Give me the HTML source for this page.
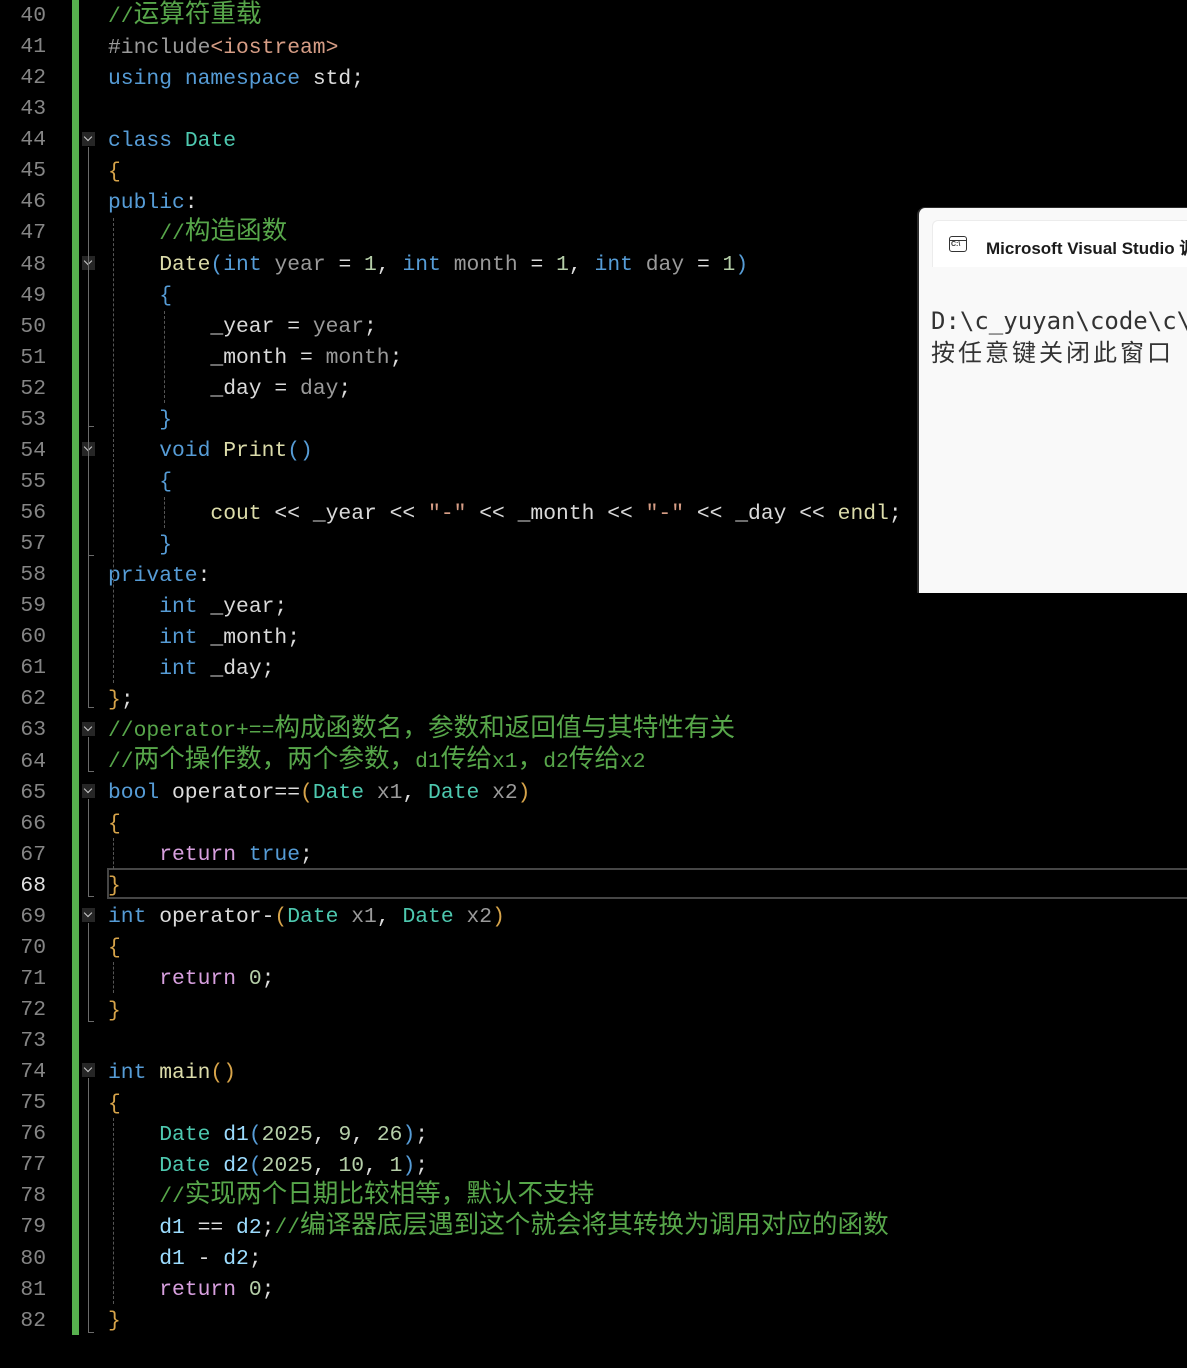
<!DOCTYPE html>
<html><head><meta charset="utf-8"><style>
body{margin:0;width:1187px;height:1368px;background:#000;overflow:hidden;position:relative;font-family:"Liberation Mono","Noto Sans CJK SC",monospace;}
#nums{position:absolute;left:0;top:1px;width:46px;text-align:right;color:#858585;font-size:21.33px;}
#nums div,#code div{height:31.07px;line-height:31.07px;}
#code{position:absolute;left:108px;top:1.5px;white-space:pre;font-size:21.33px;color:#dcdcdc;}
.z{font-family:"Noto Sans CJK SC",sans-serif;font-size:25.6px;line-height:20px;}
.k{color:#569cd6}.t{color:#4ec9b0}.c{color:#57a64a}.f{color:#dcdcaa}.p{color:#9a9a9a}.v{color:#9cdcfe}.n{color:#b5cea8}.s{color:#d69d85}.r{color:#d8a0df}.m{color:#dadada}.b1{color:#d7a44a}.b2{color:#569cd6}
.bar{position:absolute;left:72px;top:0;width:7px;height:1335px;background:#57b04e}
.fb{position:absolute;left:82px;width:13px;height:14px;background:#262626}
.fb:after{content:"";position:absolute;left:3px;top:2px;width:5px;height:5px;border-right:1.5px solid #ccc;border-bottom:1.5px solid #ccc;transform:rotate(45deg)}
.fl{position:absolute;left:88px;width:1px;background:#6a6a6a}
.tk{position:absolute;left:88px;width:6px;height:1px;background:#6a6a6a}
.dg{position:absolute;width:0;border-left:1px dashed #555}
</style></head><body>
<div class="bar"></div>
<div id="nums"><div>40</div><div>41</div><div>42</div><div>43</div><div>44</div><div>45</div><div>46</div><div>47</div><div>48</div><div>49</div><div>50</div><div>51</div><div>52</div><div>53</div><div>54</div><div>55</div><div>56</div><div>57</div><div>58</div><div>59</div><div>60</div><div>61</div><div>62</div><div>63</div><div>64</div><div>65</div><div>66</div><div>67</div><div style="color:#e0e0e0">68</div><div>69</div><div>70</div><div>71</div><div>72</div><div>73</div><div>74</div><div>75</div><div>76</div><div>77</div><div>78</div><div>79</div><div>80</div><div>81</div><div>82</div></div>

<div style="position:absolute;left:107px;top:868px;width:1090px;height:27px;border:2px solid #464646"></div>

<div id="code"><div><span class="c">//<span class="z">运算符重载</span></span></div><div><span class="p">#include</span><span class="s">&lt;iostream&gt;</span></div><div><span class="k">using</span> <span class="k">namespace</span> std;</div><div> </div><div><span class="k">class</span> <span class="t">Date</span></div><div><span class="b1">{</span></div><div><span class="k">public</span>:</div><div>    <span class="c">//<span class="z">构造函数</span></span></div><div>    <span class="f">Date</span><span class="b2">(</span><span class="k">int</span> <span class="p">year</span> = <span class="n">1</span>, <span class="k">int</span> <span class="p">month</span> = <span class="n">1</span>, <span class="k">int</span> <span class="p">day</span> = <span class="n">1</span><span class="b2">)</span></div><div>    <span class="b2">{</span></div><div>        <span class="m">_year</span> = <span class="p">year</span>;</div><div>        <span class="m">_month</span> = <span class="p">month</span>;</div><div>        <span class="m">_day</span> = <span class="p">day</span>;</div><div>    <span class="b2">}</span></div><div>    <span class="k">void</span> <span class="f">Print</span><span class="b2">()</span></div><div>    <span class="b2">{</span></div><div>        <span class="f">cout</span> &lt;&lt; <span class="m">_year</span> &lt;&lt; <span class="s">"-"</span> &lt;&lt; <span class="m">_month</span> &lt;&lt; <span class="s">"-"</span> &lt;&lt; <span class="m">_day</span> &lt;&lt; <span class="f">endl</span>;</div><div>    <span class="b2">}</span></div><div><span class="k">private</span>:</div><div>    <span class="k">int</span> <span class="m">_year</span>;</div><div>    <span class="k">int</span> <span class="m">_month</span>;</div><div>    <span class="k">int</span> <span class="m">_day</span>;</div><div><span class="b1">}</span>;</div><div><span class="c">//operator+==<span class="z">构成函数名，参数和返回值与其特性有关</span></span></div><div><span class="c">//<span class="z">两个操作数，两个参数，</span>d1<span class="z">传给</span>x1<span class="z">，</span>d2<span class="z">传给</span>x2</span></div><div><span class="k">bool</span> operator==<span class="b1">(</span><span class="t">Date</span> <span class="p">x1</span>, <span class="t">Date</span> <span class="p">x2</span><span class="b1">)</span></div><div><span class="b1">{</span></div><div>    <span class="r">return</span> <span class="k">true</span>;</div><div><span class="b1">}</span></div><div><span class="k">int</span> operator-<span class="b1">(</span><span class="t">Date</span> <span class="p">x1</span>, <span class="t">Date</span> <span class="p">x2</span><span class="b1">)</span></div><div><span class="b1">{</span></div><div>    <span class="r">return</span> <span class="n">0</span>;</div><div><span class="b1">}</span></div><div> </div><div><span class="k">int</span> <span class="f">main</span><span class="b1">()</span></div><div><span class="b1">{</span></div><div>    <span class="t">Date</span> <span class="v">d1</span><span class="b2">(</span><span class="n">2025</span>, <span class="n">9</span>, <span class="n">26</span><span class="b2">)</span>;</div><div>    <span class="t">Date</span> <span class="v">d2</span><span class="b2">(</span><span class="n">2025</span>, <span class="n">10</span>, <span class="n">1</span><span class="b2">)</span>;</div><div>    <span class="c">//<span class="z">实现两个日期比较相等，默认不支持</span></span></div><div>    <span class="v">d1</span> == <span class="v">d2</span>;<span class="c">//<span class="z">编译器底层遇到这个就会将其转换为调用对应的函数</span></span></div><div>    <span class="v">d1</span> - <span class="v">d2</span>;</div><div>    <span class="r">return</span> <span class="n">0</span>;</div><div><span class="b1">}</span></div></div>

<div class="fb" style="top:132px"></div>
<div class="fb" style="top:256px"></div>
<div class="fb" style="top:442px"></div>
<div class="fb" style="top:722px"></div>
<div class="fb" style="top:784px"></div>
<div class="fb" style="top:908px"></div>
<div class="fb" style="top:1063px"></div>
<div class="fl" style="top:147px;height:560px"></div><div class="tk" style="top:707px"></div>
<div class="tk" style="top:426px"></div><div class="tk" style="top:555px"></div>
<div class="fl" style="top:737px;height:34px"></div><div class="tk" style="top:771px"></div>
<div class="fl" style="top:799px;height:97px"></div><div class="tk" style="top:896px"></div>
<div class="fl" style="top:923px;height:98px"></div><div class="tk" style="top:1021px"></div>
<div class="fl" style="top:1078px;height:254px"></div><div class="tk" style="top:1332px"></div>

<div class="dg" style="left:113px;top:218px;height:465px"></div>
<div class="dg" style="left:164px;top:311px;height:92px"></div>
<div class="dg" style="left:164px;top:497px;height:31px"></div>
<div class="dg" style="left:113px;top:838px;height:31px"></div>
<div class="dg" style="left:113px;top:962px;height:31px"></div>
<div class="dg" style="left:113px;top:1118px;height:186px"></div>

<div style="position:absolute;left:917px;top:207px;width:280px;height:385px;background:#f9f9f9;border-left:2px solid #2b2b2b;border-top:1px solid #2b2b2b;border-top-left-radius:8px"></div>
<div style="position:absolute;left:932px;top:220px;width:260px;height:46px;background:#fff;border-top-left-radius:6px;border:1px solid #ececec;border-right:none;border-bottom:none"></div>
<div style="position:absolute;left:949px;top:236px;width:18px;height:16px;border:1.5px solid #333;border-radius:3px;box-sizing:border-box"><div style="position:absolute;left:0;right:0;top:3px;height:1px;background:#333"></div><div style="position:absolute;left:1px;top:4px;font:bold 7px 'Liberation Sans',sans-serif;color:#333">C:\</div></div>
<div style="position:absolute;left:986px;top:234px;font:bold 17px 'Liberation Sans',sans-serif;color:#1b1b1b;white-space:nowrap">Microsoft Visual Studio 调</div>
<div style="position:absolute;left:931px;top:307px;font:24px 'DejaVu Sans Mono',monospace;color:#333;white-space:pre;line-height:29px">D:\c_yuyan\code\c\t<br><span style="font-family:'Noto Sans CJK SC',sans-serif;letter-spacing:3px">按任意键关闭此窗口</span></div>
</body></html>
